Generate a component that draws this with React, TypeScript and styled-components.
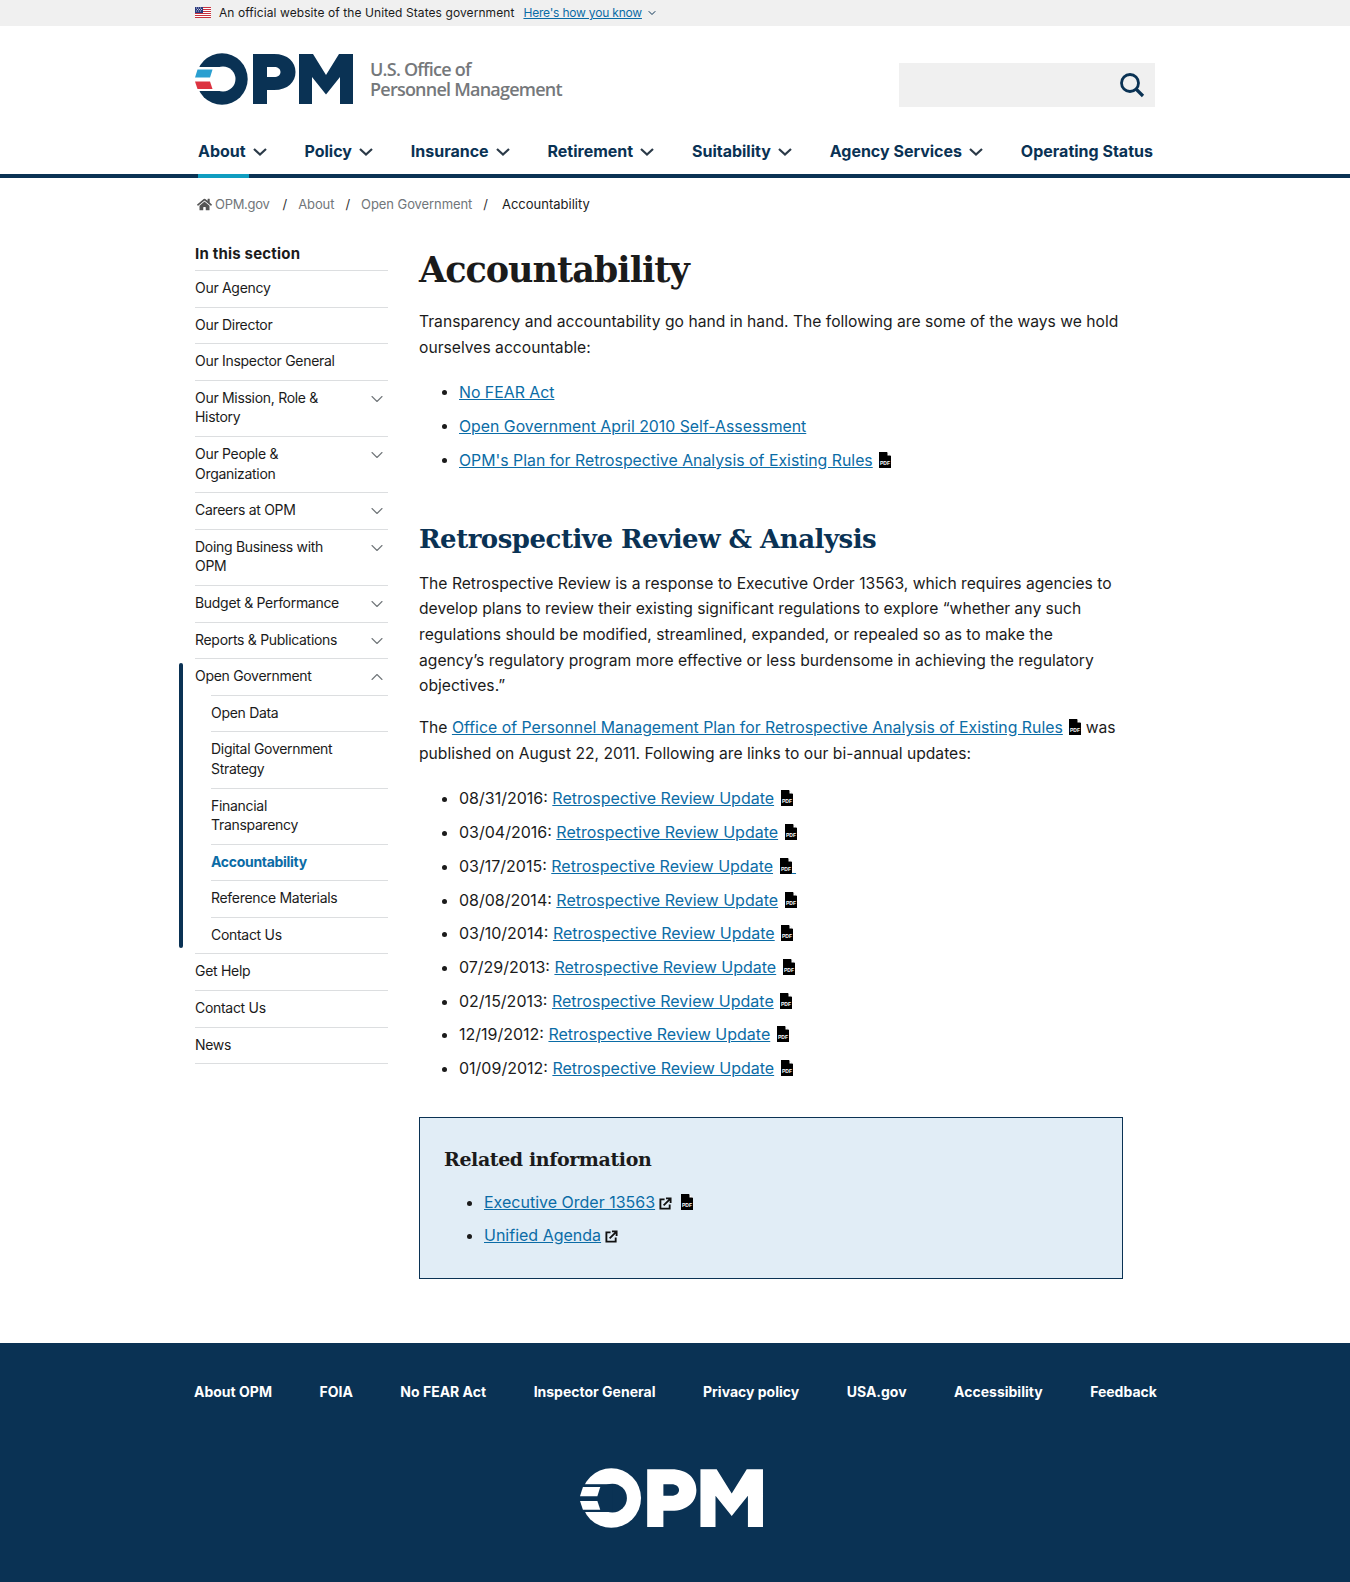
import React from 'react';
import styled, { createGlobalStyle } from 'styled-components';
import { FaHome } from 'react-icons/fa';
import { ChevronDown, ChevronUp } from 'lucide-react';

const NAVY = '#0a3254';
const LINK = '#0b6ca6';
const SANS = '"Inter", "Noto Sans", "Liberation Sans", sans-serif';
const SERIF = '"DejaVu Serif", "Liberation Serif", serif';

const GlobalStyle = createGlobalStyle`
  html, body { margin: 0; padding: 0; background: #fff; }
  body { font-family: ${SANS}; color: #1b1b1b; }
  * { box-sizing: border-box; }
  a { color: inherit; text-decoration: none; }
`;

const navItems = [
  { label: 'About', caret: true, active: true },
  { label: 'Policy', caret: true },
  { label: 'Insurance', caret: true },
  { label: 'Retirement', caret: true },
  { label: 'Suitability', caret: true },
  { label: 'Agency Services', caret: true },
  { label: 'Operating Status' },
];

type SideItem = { label: string; caret?: boolean };

const sideTop: SideItem[] = [
  { label: 'Our Agency' },
  { label: 'Our Director' },
  { label: 'Our Inspector General' },
  { label: 'Our Mission, Role & History', caret: true },
  { label: 'Our People & Organization', caret: true },
  { label: 'Careers at OPM', caret: true },
  { label: 'Doing Business with OPM', caret: true },
  { label: 'Budget & Performance', caret: true },
  { label: 'Reports & Publications', caret: true },
];

const sideSub = ['Open Data', 'Digital Government Strategy', 'Financial Transparency', 'Accountability', 'Reference Materials', 'Contact Us'];
const sideBottom = ['Get Help', 'Contact Us', 'News'];

const updates = ['08/31/2016', '03/04/2016', '03/17/2015', '08/08/2014', '03/10/2014', '07/29/2013', '02/15/2013', '12/19/2012', '01/09/2012'];

const footerLinks = ['About OPM', 'FOIA', 'No FEAR Act', 'Inspector General', 'Privacy policy', 'USA.gov', 'Accessibility', 'Feedback'];

const Flag = () => (
  <svg width="16" height="11" viewBox="0 0 16 11">
    <rect width="16" height="11" fill="#fff" />
    {[0, 2, 4, 6, 8, 10].map(y => (
      <rect key={y} y={y} width="16" height="1" fill="#c8313e" />
    ))}
    <rect width="8" height="6" fill="#2b3a7e" />
    <path d="M1 1h1M3 1h1M5 1h1M2 2.5h1M4 2.5h1M6 2.5h1M1 4h1M3 4h1M5 4h1" stroke="#fff" strokeWidth=".7" />
  </svg>
);

type LogoProps = { width: number; main: string; hole: string; top: string; bottom: string };

const OpmLogo = ({ width, main, hole, top, bottom }: LogoProps) => (
  <svg width={width} viewBox="0 0 158 53" style={{ display: 'block' }}>
    <circle cx="27" cy="26" r="25.700" fill={main} />
    <circle cx="28" cy="26" r="12.500" fill={hole} />
    <rect x="0" y="14" width="28" height="24" fill={hole} />
    <path d="M2.500 16.500H17.500L15 24.500H0Z" fill={top} />
    <path d="M0 28.500H15L17.500 36H2.500Z" fill={bottom} />
    <path fillRule="evenodd" d="M58 1H79C93 1 100.500 9 100.500 19C100.500 29 93 37 79 37H72V51H58ZM72 14V24H79C83 24 85.500 22 85.500 19C85.500 16 83 14 79 14Z" fill={main} />
    <path d="M104 1H118L131 22L144 1H158V51H145V24L131 41.500L117 24V51H104Z" fill={main} />
  </svg>
);

const PdfIcon = () => (
  <PdfSvg viewBox="0 0 12 16">
    <path d="M0 0H8L12 4V16H0Z" fill="#000" />
    <path d="M8.500 0L12 3.500H8.500Z" fill="#fff" />
    <text x="6" y="12.500" textAnchor="middle" fontSize="5" fontWeight="700" fill="#fff" fontFamily="Liberation Sans, sans-serif">PDF</text>
  </PdfSvg>
);

const ExternalIcon = () => (
  <ExternalSvg viewBox="0 0 14 14">
    <path d="M6 2.500H1.500V12.500H11.500V8" fill="none" stroke="#111" strokeWidth="2" />
    <path d="M5 9L11.500 2.500M7.500 1.500H12.500V6.500" fill="none" stroke="#111" strokeWidth="2" />
  </ExternalSvg>
);

const App = () => {
  return (
    <>
      <GlobalStyle />
      <Banner>
        <Wrap>
          <BannerRow>
            <Flag />
            <span>An official website of the United States government</span>
            <BannerLink href="#">Here's how you know</BannerLink>
            <ChevronDown size={12} color={NAVY} strokeWidth={2} />
          </BannerRow>
        </Wrap>
      </Banner>

      <Wrap>
        <HeaderRow>
          <LogoBlock>
            <OpmLogo width={158} main={NAVY} hole="#fff" top="#2a9fd0" bottom="#dc3340" />
            <LogoText>
              U.S. Office of
              <br />
              Personnel Management
            </LogoText>
          </LogoBlock>
          <SearchBox>
            <svg width="26" height="26" viewBox="0 0 26 26">
              <circle cx="11" cy="11" r="8.500" fill="none" stroke={NAVY} strokeWidth="2.800" />
              <path d="M17 17L24 24" stroke={NAVY} strokeWidth="3.200" />
            </svg>
          </SearchBox>
        </HeaderRow>
        <Nav>
          {navItems.map(item => (
            <NavItem key={item.label} $active={item.active}>
              {item.label}
              {item.caret && <NavCaret viewBox="0 0 16 10"><path d="M2 2L8 7.500L14 2" /></NavCaret>}
            </NavItem>
          ))}
        </Nav>
      </Wrap>
      <NavRule />

      <Wrap>
        <Breadcrumb>
          <FaHome size={15} color="#555" />
          <HomeCrumb href="#">OPM.gov</HomeCrumb>
          <Slash>/</Slash>
          <Crumb href="#">About</Crumb>
          <Slash>/</Slash>
          <Crumb href="#">Open Government</Crumb>
          <Slash>/</Slash>
          <CrumbCurrent>Accountability</CrumbCurrent>
        </Breadcrumb>

        <Columns>
          <Sidebar>
            <SideTitle>In this section</SideTitle>
            {sideTop.map(item => (
              <SideRow key={item.label}>
                <SideLabel>{item.label}</SideLabel>
                {item.caret && (
                  <SideCaret>
                    <ChevronDown size={20} strokeWidth={1.300} />
                  </SideCaret>
                )}
              </SideRow>
            ))}
            <OpenGroup>
              <SideRow>
                <SideLabel>Open Government</SideLabel>
                <SideCaret>
                  <ChevronUp size={20} strokeWidth={1.300} />
                </SideCaret>
              </SideRow>
              <SubList>
                {sideSub.map(label => (
                  <SideRow key={label}>
                    <SideLabel $current={label === 'Accountability'}>{label}</SideLabel>
                  </SideRow>
                ))}
              </SubList>
            </OpenGroup>
            {sideBottom.map((label, i) => (
              <SideRow key={label} $last={i === sideBottom.length - 1}>
                <SideLabel>{label}</SideLabel>
              </SideRow>
            ))}
          </Sidebar>

          <Main>
            <Title>Accountability</Title>
            <Para>
              Transparency and accountability go hand in hand. The following are some of the ways we hold ourselves accountable:
            </Para>
            <IntroList>
              <li><TextLink href="#">No FEAR Act</TextLink></li>
              <li><TextLink href="#">Open Government April 2010 Self-Assessment</TextLink></li>
              <li><TextLink href="#">OPM's Plan for Retrospective Analysis of Existing Rules</TextLink> <PdfIcon /></li>
            </IntroList>

            <SubTitle>Retrospective Review &amp; Analysis</SubTitle>
            <Para>
              The Retrospective Review is a response to Executive Order 13563, which requires agencies to develop plans to review their existing significant regulations to explore “whether any such regulations should be modified, streamlined, expanded, or repealed so as to make the agency’s regulatory program more effective or less burdensome in achieving the regulatory objectives.”
            </Para>
            <Para>
              The <TextLink href="#">Office of Personnel Management Plan for Retrospective Analysis of Existing Rules</TextLink> <PdfIcon /> <span>was</span> published on August 22, 2011. Following are links to our bi-annual updates:
            </Para>
            <List>
              {updates.map(date => (
                <li key={date}>
                  {date}: <TextLink href="#">Retrospective Review Update</TextLink> <PdfIcon />
                  {date === '03/17/2015' && <TextLink href="#">&nbsp;</TextLink>}
                </li>
              ))}
            </List>

            <Related>
              <RelatedTitle>Related information</RelatedTitle>
              <RelatedList>
                <li>
                  <TextLink href="#">Executive Order 13563</TextLink> <ExternalIcon /> <PdfIcon />
                </li>
                <li>
                  <TextLink href="#">Unified Agenda</TextLink> <ExternalIcon />
                </li>
              </RelatedList>
            </Related>
          </Main>
        </Columns>
      </Wrap>

      <Footer>
        <FooterLinks>
          {footerLinks.map(label => (
            <a key={label} href="#">{label}</a>
          ))}
        </FooterLinks>
        <FooterLogo>
          <OpmLogo width={183} main="#fff" hole={NAVY} top="#fff" bottom="#fff" />
        </FooterLogo>
      </Footer>
    </>
  );
};

export default App;

const Wrap = styled.div`
  width: 960px;
  margin-left: 195px;
`;

const Banner = styled.div`
  height: 26px;
  background: #f0f0f0;
`;

const BannerRow = styled.div`
  display: flex;
  align-items: center;
  height: 25px;
  font-size: 12px;
  color: #1b1b1b;

  span {
    margin-left: 8px;
    letter-spacing: 0.08px;
  }
  svg:last-child {
    margin-left: 4px;
  }
`;

const BannerLink = styled.a`
  margin-left: 9px;
  color: ${LINK};
  letter-spacing: -0.2px;
  text-decoration: underline;
`;

const HeaderRow = styled.div`
  display: flex;
  align-items: flex-start;
  justify-content: space-between;
  height: 106px;
  padding-top: 27px;
`;

const LogoBlock = styled.div`
  display: flex;
  align-items: center;
`;

const LogoText = styled.div`
  margin: -1px 0 0 17px;
  font-family: "Open Sans", sans-serif;
  font-size: 18px;
  font-weight: 600;
  line-height: 20px;
  letter-spacing: -0.77px;
  color: #75787b;
`;

const SearchBox = styled.div`
  display: flex;
  align-items: center;
  justify-content: flex-end;
  width: 256px;
  height: 44px;
  margin-top: 10px;
  padding-right: 10px;
  background: #f0f0f0;
`;

const Nav = styled.nav`
  display: flex;
  justify-content: space-between;
  height: 43px;
  padding: 0 2px 0 3px;
`;

const NavItem = styled.a<{ $active?: boolean }>`
  position: relative;
  display: flex;
  align-items: center;
  gap: 6px;
  height: 38px;
  font-size: 16px;
  font-weight: 700;
  color: ${NAVY};

  &::after {
    content: '';
    position: absolute;
    left: 0;
    width: 51px;
    top: 42px;
    height: 4px;
    background: #0f9dc0;
    display: ${props => (props.$active ? 'block' : 'none')};
    z-index: 1;
  }
`;

const NavCaret = styled.svg`
  width: 16px;
  height: 10px;
  margin-top: 2px;

  path {
    fill: none;
    stroke: #2b3a48;
    stroke-width: 2.200;
  }
`;

const NavRule = styled.div`
  height: 4px;
  margin-top: -1px;
  background: ${NAVY};
`;

const Breadcrumb = styled.div`
  display: flex;
  align-items: center;
  height: 52px;
  padding-left: 2px;
  font-size: 13px;
`;

const Crumb = styled.a`
  color: #71767a;
  letter-spacing: -0.08px;
`;

const HomeCrumb = styled(Crumb)`
  margin: 0 2px 0 3px;
  letter-spacing: -0.3px;
`;

const CrumbCurrent = styled.span`
  margin-left: 3px;
  color: #1b1b1b;
`;

const Slash = styled.span`
  margin: 0 11px;
  color: #333;
`;

const Columns = styled.div`
  display: flex;
  align-items: flex-start;
  gap: 31px;
`;

const Sidebar = styled.aside`
  flex: 0 0 193px;
  padding-top: 14px;
`;

const SideTitle = styled.div`
  height: 26px;
  font-size: 15px;
  font-weight: 700;
  line-height: 20px;
  letter-spacing: 0.2px;
`;

const SideRow = styled.div<{ $last?: boolean }>`
  display: flex;
  justify-content: space-between;
  padding: 7px 0 9px;
  border-top: 1px solid #dcdee0;
  border-bottom: ${props => (props.$last ? '1px solid #dcdee0' : 'none')};
`;

const SideLabel = styled.a<{ $current?: boolean }>`
  max-width: 155px;
  font-size: 14px;
  line-height: 19.6px;
  letter-spacing: -0.3px;
  font-weight: ${props => (props.$current ? 700 : 400)};
  color: ${props => (props.$current ? LINK : '#1b1b1b')};
`;

const SideCaret = styled.span`
  display: flex;
  height: 19px;
  margin-right: 1px;
  padding-top: 1px;
  color: #71767a;
`;

const OpenGroup = styled.div`
  position: relative;

  &::before {
    content: '';
    position: absolute;
    left: -16px;
    top: 5px;
    bottom: 5px;
    width: 4px;
    border-radius: 2px;
    background: ${NAVY};
  }
`;

const SubList = styled.div`
  margin-left: 16px;

  ${SideLabel} {
    max-width: 140px;
  }
`;

const Main = styled.main`
  flex: 0 0 704px;
`;

const Title = styled.h1`
  margin: 12px 0 -1px;
  font-family: ${SERIF};
  font-size: 35px;
  line-height: 56px;
  letter-spacing: -1px;
  font-weight: 700;
  color: #1b1b1b;
`;

const SubTitle = styled.h2`
  margin: 45px 0 0;
  font-family: ${SERIF};
  font-size: 26px;
  line-height: 40px;
  letter-spacing: -0.5px;
  font-weight: 700;
  color: ${NAVY};
`;

const TextLink = styled.a`
  color: ${LINK};
  text-decoration: underline;
`;

const Para = styled.p`
  margin: 12px 0 0;
  padding-right: 3px;
  font-size: 15.66px;
  line-height: 25.700px;
  color: #1b1b1b;

  & + & {
    margin-top: 16px;
  }

  ${TextLink} {
    font-size: 15.84px;
  }
`;

const List = styled.ul`
  margin: 20px 0 0;
  padding-left: 40px;
  font-size: 16px;
  line-height: 25.700px;

  li {
    margin-bottom: 8px;
  }
`;

const IntroList = styled(List)`
  font-size: 15.83px;
`;

const PdfSvg = styled.svg`
  display: inline-block;
  width: 12px;
  height: 16px;
  margin-left: 2px;
  vertical-align: -2px;
`;

const ExternalSvg = styled.svg`
  display: inline-block;
  width: 13px;
  height: 13px;
  margin: 0 3px 0 -1px;
  vertical-align: -2px;
`;

const Related = styled.section`
  margin-top: 35px;
  padding: 26px 24px 20px;
  height: 162px;
  background: #e1edf6;
  border: 1px solid ${NAVY};
`;

const RelatedTitle = styled.h3`
  margin: 0;
  font-family: ${SERIF};
  font-size: 19px;
  line-height: 30px;
  letter-spacing: -0.4px;
  font-weight: 700;
  color: #1b1b1b;
`;

const RelatedList = styled(List)`
  margin-top: 16px;
`;

const Footer = styled.footer`
  height: 239px;
  margin-top: 64px;
  padding-top: 39px;
  background: ${NAVY};
`;

const FooterLinks = styled.div`
  display: flex;
  justify-content: space-between;
  width: 963px;
  margin-left: 194px;
  font-size: 14px;
  line-height: 20px;
  font-weight: 700;
  color: #fff;
`;

const FooterLogo = styled.div`
  display: flex;
  justify-content: center;
  margin: 66px 8px 0 0;
`;
